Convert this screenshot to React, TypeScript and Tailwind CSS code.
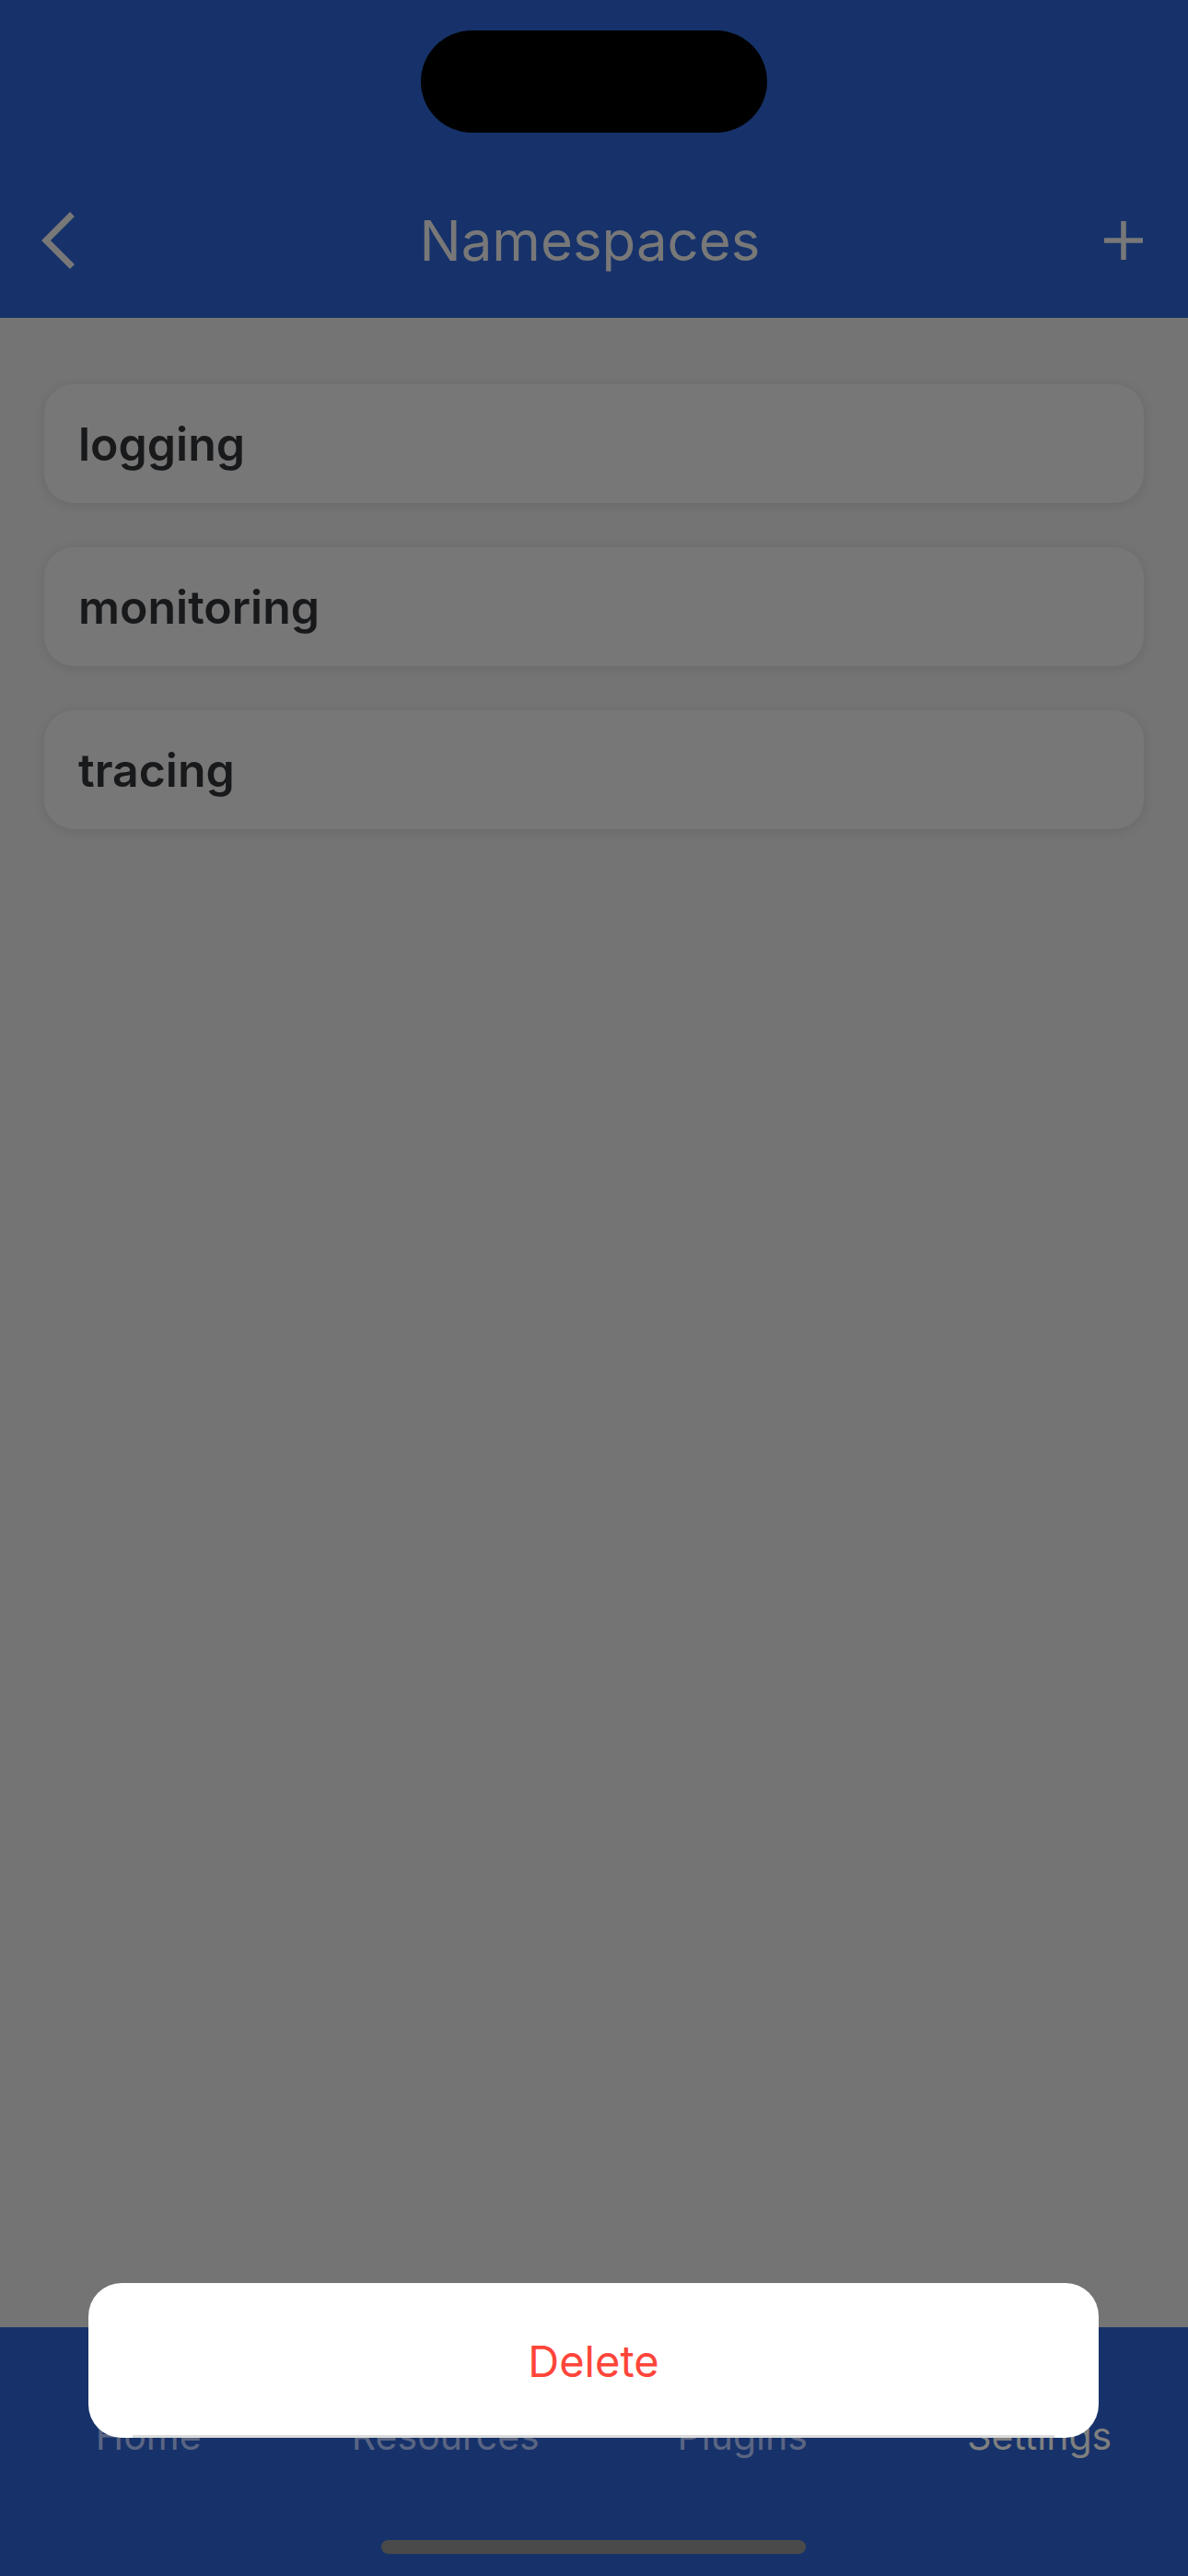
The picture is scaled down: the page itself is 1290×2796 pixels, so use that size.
import React from "react";

const items = ["logging", "monitoring", "tracing"];
const tabs = [
  { label: "Home", active: false },
  { label: "Resources", active: false },
  { label: "Plugins", active: false },
  { label: "Settings", active: true },
];

export default function App() {
  return (
    <div
      className="relative w-[1290px] h-[2796px] overflow-hidden bg-[#747474] flex flex-col"
      style={{ fontFamily: "Inter, 'Noto Sans', sans-serif" }}
    >
      {/* Header */}
      <header className="bg-[#17326a] h-[345px] pt-[200px] shrink-0">
        <div className="h-[122px] flex items-center justify-between px-[44px]">
          <svg width="44" height="64" viewBox="0 0 44 64" className="-ml-[4px]">
            <path d="M36 6 L10 32 L36 58" fill="none" stroke="#787878" strokeWidth="7" strokeLinecap="square" />
          </svg>
          <h1 className="text-[60px] leading-none text-[#787878] font-normal tracking-[0px]">Namespaces</h1>
          <svg width="46" height="46" viewBox="0 0 46 46" className="mr-[3px]">
            <path d="M23 2 V44 M2 23 H44" fill="none" stroke="#787878" strokeWidth="5.5" />
          </svg>
        </div>
      </header>

      {/* Content */}
      <main className="flex-1 px-[48px] pt-[72px] flex flex-col gap-[48px]">
        {items.map((name) => (
          <div
            key={name}
            className="h-[129px] rounded-[32px] bg-[#777777] shadow-[0_2px_12px_rgba(0,0,0,0.10)] flex items-center px-[37px]"
          >
            <span className="text-[50px] font-semibold text-[#18191b] leading-none">{name}</span>
          </div>
        ))}
      </main>

      {/* Tab bar */}
      <nav className="bg-[#17326a] h-[270px] shrink-0 pt-[94px] relative">
        <div className="grid grid-cols-4">
          {tabs.map((t) => (
            <div key={t.label} className="flex justify-center">
              <span
                className={
                  t.active
                    ? "text-[41px] leading-[48px] text-[#7f7f7f]"
                    : "text-[41px] leading-[48px] text-[#5a6583]"
                }
              >
                {t.label}
              </span>
            </div>
          ))}
        </div>
        <div className="absolute left-[414px] top-[231px] w-[461px] h-[15px] rounded-full bg-[#4a4a4a]" />
      </nav>

      {/* Dynamic island */}
      <div className="absolute left-[457px] top-[33px] w-[376px] h-[111px] rounded-full bg-black" />

      {/* Action sheet */}
      <div className="absolute left-[96px] top-[2478px] w-[1097px] h-[168px] rounded-[36px] bg-white flex items-center justify-center overflow-hidden">
        <span className="text-[47px] leading-none text-[#ff453a] font-normal">Delete</span>
        <div className="absolute left-[48px] right-[48px] bottom-0 h-[3px] bg-[#dcdcdc]" />
      </div>
    </div>
  );
}
